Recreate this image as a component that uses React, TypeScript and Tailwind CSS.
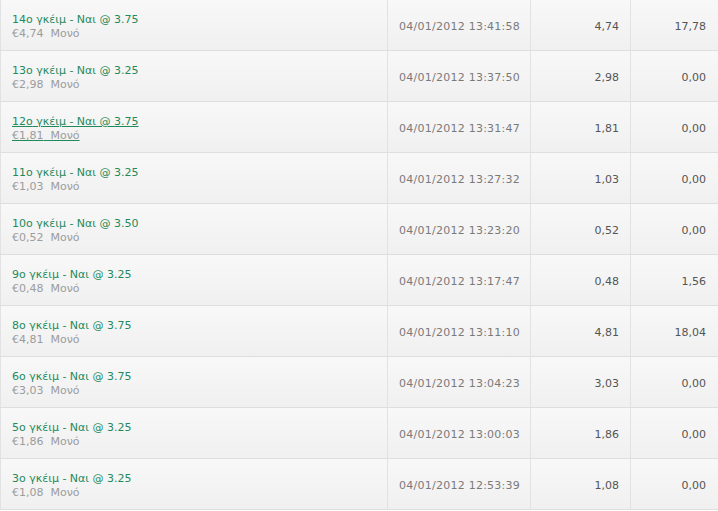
const rows = [
  { game: '14ο', odds: '3.75', stake: '4,74', time: '13:41:58', ret: '17,78' },
  { game: '13ο', odds: '3.25', stake: '2,98', time: '13:37:50', ret: '0,00' },
  { game: '12ο', odds: '3.75', stake: '1,81', time: '13:31:47', ret: '0,00', hover: true },
  { game: '11ο', odds: '3.25', stake: '1,03', time: '13:27:32', ret: '0,00' },
  { game: '10ο', odds: '3.50', stake: '0,52', time: '13:23:20', ret: '0,00' },
  { game: '9ο', odds: '3.25', stake: '0,48', time: '13:17:47', ret: '1,56' },
  { game: '8ο', odds: '3.75', stake: '4,81', time: '13:11:10', ret: '18,04' },
  { game: '6ο', odds: '3.75', stake: '3,03', time: '13:04:23', ret: '0,00' },
  { game: '5ο', odds: '3.25', stake: '1,86', time: '13:00:03', ret: '0,00' },
  { game: '3ο', odds: '3.25', stake: '1,08', time: '12:53:39', ret: '0,00' },
]

export default function App() {
  return (
    <div className="w-[718px] h-[511px] bg-white font-['DejaVu_Sans',Verdana,sans-serif] text-[11px] leading-[14px]">
      {rows.map((r) => (
        <div
          key={r.game}
          className="grid grid-cols-[388px_143px_100px_1fr] h-[51px] border-b border-[#dedede] bg-gradient-to-b from-[#f8f8f8] to-[#f0f0f0]"
        >
          {/* selection */}
          <div className="border-r border-l border-[#e2e2e2] pl-[11px] pt-[13px]">
            <a
              href="#"
              className={
                r.hover
                  ? 'block w-max text-[#1f8a5c] underline decoration-[#1f8a5c]'
                  : 'block w-max text-[#1f8a5c] no-underline'
              }
            >
              <span className="block">
                {r.game} γκέιμ - Ναι @ {r.odds}
              </span>
              <span className="block text-[#9c9c9c]">
                €{r.stake}&nbsp;&nbsp;Μονό
              </span>
            </a>
          </div>
          {/* placed */}
          <div className="border-r border-[#e2e2e2] flex items-center pt-[4px] pl-[11px] text-[#7a7a7a] tracking-[0.25px]">
            04/01/2012 {r.time}
          </div>
          {/* stake */}
          <div className="border-r border-[#e2e2e2] flex items-center justify-end pt-[4px] pr-[11px] text-[#555]">
            {r.stake}
          </div>
          {/* return */}
          <div className="flex items-center justify-end pt-[4px] pr-[12px] text-[#555]">{r.ret}</div>
        </div>
      ))}
    </div>
  )
}
